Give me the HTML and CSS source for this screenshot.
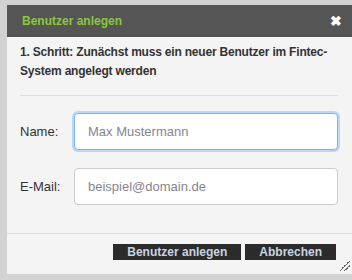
FILE: index.html
```html
<!DOCTYPE html>
<html lang="de">
<head>
    <meta charset="UTF-8">
    <title>Benutzer anlegen</title>
    <link rel="stylesheet" href="styles.css">
</head>
<body>

<div class="dialog">
    <header class="dialog-title">
        <span>Benutzer anlegen</span>
        <span class="close">&#10006;</span>
    </header>
    <div class="dialog-body">
        <p class="intro">1. Schritt: Zunächst muss ein neuer Benutzer im Fintec-System angelegt werden</p>
        <hr>
        <form class="user-form">
            <div class="row">
                <label for="name">Name:</label>
                <input type="text" id="name" class="focused" placeholder="Max Mustermann">
            </div>
            <div class="row">
                <label for="email">E-Mail:</label>
                <input type="text" id="email" placeholder="beispiel@domain.de">
            </div>
        </form>
    </div>
    <footer class="dialog-buttons">
        <button type="button">Benutzer anlegen</button>
        <button type="button">Abbrechen</button>
        <span class="grip"></span>
    </footer>
</div>

</body>
</html>
```

FILE: styles.css
```css
body {
    margin: 0;
    padding: 5px 0 0 7px;
    background-color: #d2d2d2;
    font-family: "Liberation Sans", Arial, sans-serif;
    font-size: 13px;
    color: #333;
    overflow: hidden;
}
.dialog {
    background-color: #f4f4f4;
    height: 269px;
    position: relative;
}
.dialog-title {
    background-color: #555;
    color: #8cc63e;
    font-weight: bold;
    font-size: 12px;
    height: 32px;
    display: flex;
    align-items: center;
    justify-content: space-between;
    padding: 0 10px 0 15px;
}
.close {
    color: white;
    font-size: 14px;
}
.dialog-body {
    padding: 0 14px 0 13px;
}
.intro {
    font-weight: bold;
    font-size: 12px;
    letter-spacing: -0.2px;
    margin: 0;
    padding-top: 6px;
    line-height: 19px;
}
hr {
    border: none;
    border-top: 1px solid #ddd;
    margin: 14px 0 0 0;
}
.user-form {
    padding-top: 17px;
}
.row {
    display: flex;
    align-items: center;
    margin-bottom: 18px;
}
label {
    width: 54px;
}
input {
    flex: 1;
    height: 37px;
    box-sizing: border-box;
    border: 1px solid #ccc;
    border-radius: 4px;
    padding: 0 13px;
    font-family: "Liberation Sans", Arial, sans-serif;
    font-size: 13px;
    background: white;
}
input::placeholder {
    color: #858593;
}
input.focused {
    border-color: #7fb5ee;
    box-shadow: 0 0 0 2px #b9d7f8;
    outline: none;
}
.dialog-buttons {
    border-top: 1px solid #ddd;
    margin-top: 28px;
    display: flex;
    justify-content: flex-end;
    gap: 4px;
    padding: 10px 16px 0 0;
}
button {
    background-color: #2b2b2b;
    color: #c9d5e2;
    border: none;
    font-family: "Liberation Sans", Arial, sans-serif;
    font-weight: bold;
    font-size: 12px;
    height: 16px;
    padding: 0 14px;
    line-height: 16px;
}
.grip {
    position: absolute;
    right: 2px;
    bottom: 3px;
    width: 10px;
    height: 10px;
    background: linear-gradient(135deg, transparent 45%, #666 45%, #666 52%, transparent 52%, transparent 68%, #666 68%, #666 75%, transparent 75%);
}
```
